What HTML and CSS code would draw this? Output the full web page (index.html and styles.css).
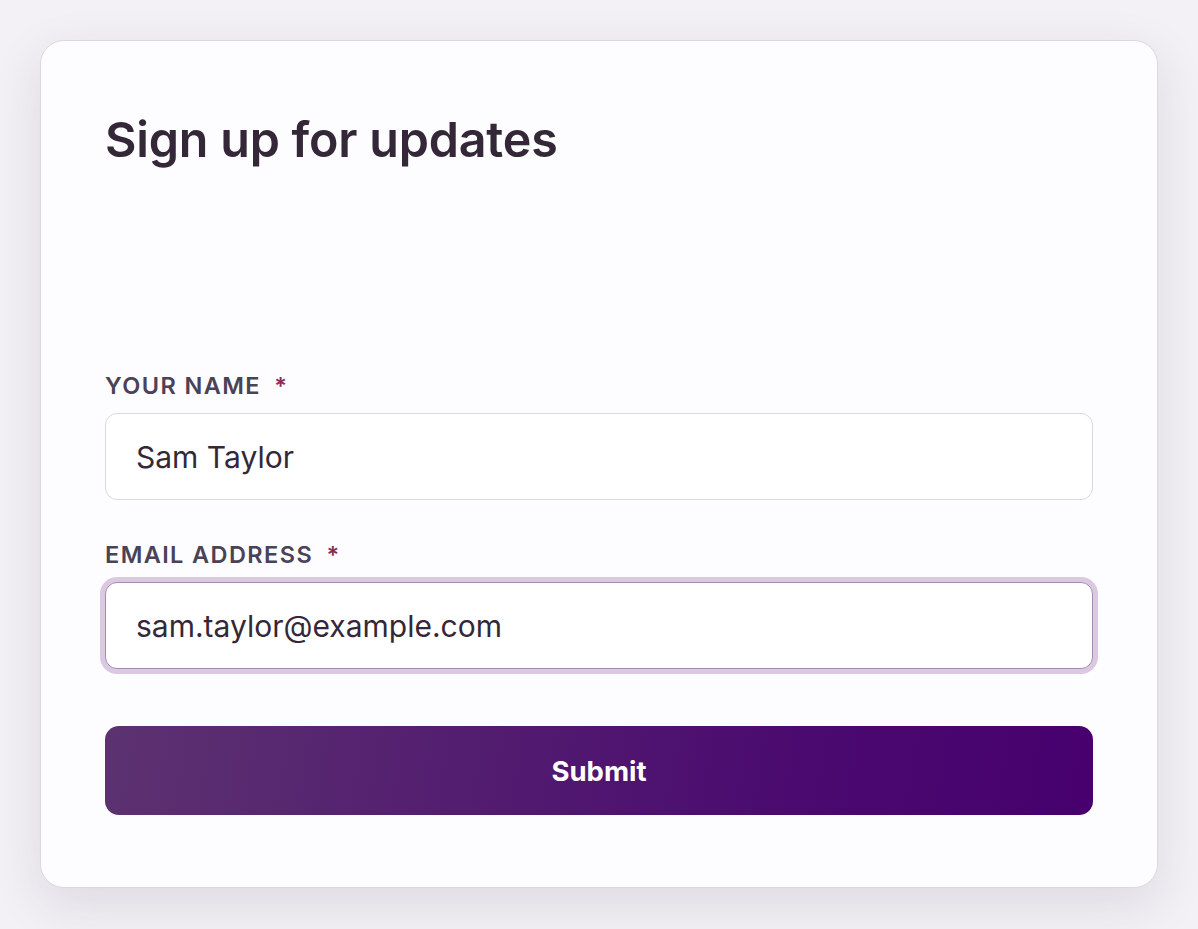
FILE: index.html
```html
<!DOCTYPE html>
<html lang="en">
<head>
<meta charset="utf-8">
<title>Sign up for updates</title>
<link rel="stylesheet" href="styles.css">
</head>
<body>
<main class="card">
  <h1 class="title">Sign up for updates</h1>
  <div class="spacer"></div>
  <form class="form">
    <div class="field">
      <label class="label" for="name">Your name <span class="req">*</span></label>
      <input class="input" id="name" type="text" value="Sam Taylor">
    </div>
    <div class="field">
      <label class="label" for="email">Email address <span class="req">*</span></label>
      <input class="input input-focus" id="email" type="email" value="sam.taylor@example.com">
    </div>
    <button class="submit" type="button">Submit</button>
  </form>
</main>
</body>
</html>
```
FILE: styles.css
```css
* { box-sizing: border-box; }
html, body { margin: 0; height: 100%; }
body {
  background: #f3f1f5;
  font-family: Inter, "Noto Sans", sans-serif;
  padding: 40px;
}
.card {
  height: 848px;
  background: #fdfcfe;
  border: 1.5px solid #dcd8df;
  border-radius: 24px;
  box-shadow: 0 16px 50px rgba(60, 40, 80, 0.12);
  padding: 70px 64px 72px;
  display: flex;
  flex-direction: column;
}
.title {
  margin: 0;
  font-size: 48.4px;
  font-weight: 600;
  line-height: 1.2;
  color: #342838;
  letter-spacing: -0.2px;
}
.spacer { flex: 1; }
.form { display: flex; flex-direction: column; }
.field { display: flex; flex-direction: column; margin-bottom: 40px; }
.label {
  font-size: 23.5px;
  font-weight: 600;
  text-transform: uppercase;
  letter-spacing: 1.4px;
  color: #4a4256;
  margin-bottom: 13px;
}
.req { color: #8a2a55; margin-left: 6px; }
.input {
  height: 87px;
  border: 1.5px solid #dcd8df;
  border-radius: 12px;
  background: #fff;
  padding: 0 30px;
  font-family: inherit;
  font-size: 30px;
  color: #342838;
  outline: none;
}
.input-focus {
  border-color: #a58cb0;
  box-shadow: 0 0 0 5px #dbc9e1;
}
.submit {
  margin-top: 17px;
  height: 89px;
  border: 0;
  border-radius: 14px;
  background: linear-gradient(100deg, #5c3270 0%, #4a0a6f 70%, #47006e 100%);
  color: #fff;
  font-family: inherit;
  font-size: 27.5px;
  font-weight: 700;
}
```
